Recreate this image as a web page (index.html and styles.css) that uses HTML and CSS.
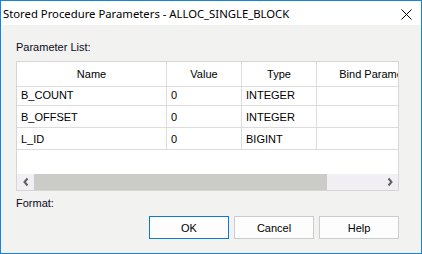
FILE: index.html
```html
<!DOCTYPE html>
<html lang="en">
<head>
    <meta charset="UTF-8">
    <title>Stored Procedure Parameters</title>
    <link rel="stylesheet" href="styles.css">
</head>
<body>
    <div class="window">
        <div class="titlebar">
            <span class="title">Stored Procedure Parameters - ALLOC_SINGLE_BLOCK</span>
            <svg class="close" width="11" height="11" viewBox="0 0 11 11">
                <path d="M0.5 0.5 L10.5 10.5 M10.5 0.5 L0.5 10.5" stroke="#000" stroke-width="1" fill="none"/>
            </svg>
        </div>

        <div class="content">
            <div class="label">Parameter List:</div>

            <div class="table">
                <div class="grid-clip">
                    <div class="grid">
                        <div class="cell head">Name</div>
                        <div class="cell head">Value</div>
                        <div class="cell head">Type</div>
                        <div class="cell head">Bind Parameter</div>

                        <div class="cell">B_COUNT</div>
                        <div class="cell">0</div>
                        <div class="cell">INTEGER</div>
                        <div class="cell"></div>

                        <div class="cell">B_OFFSET</div>
                        <div class="cell">0</div>
                        <div class="cell">INTEGER</div>
                        <div class="cell"></div>

                        <div class="cell">L_ID</div>
                        <div class="cell">0</div>
                        <div class="cell">BIGINT</div>
                        <div class="cell"></div>
                    </div>
                </div>

                <div class="hscroll">
                    <div class="arrow">
                        <svg width="8" height="10" viewBox="0 0 8 10"><path d="M5.5 1.5 L2.5 5 L5.5 8.5" stroke="#606060" stroke-width="2" fill="none"/></svg>
                    </div>
                    <div class="track"><div class="thumb"></div></div>
                    <div class="arrow">
                        <svg width="8" height="10" viewBox="0 0 8 10"><path d="M2.5 1.5 L5.5 5 L2.5 8.5" stroke="#606060" stroke-width="2" fill="none"/></svg>
                    </div>
                </div>
            </div>

            <div class="label format">Format:</div>

            <div class="buttons">
                <button class="btn default">OK</button>
                <button class="btn">Cancel</button>
                <button class="btn">Help</button>
            </div>
        </div>
    </div>
</body>
</html>
```

FILE: styles.css
```css
body {
    margin: 0;
    font-family: 'Liberation Sans', Arial, sans-serif;
    font-size: 11px;
    color: #000;
}
.window {
    width: 422px;
    height: 254px;
    box-sizing: border-box;
    border: 1px solid #1883d7;
    background: #f2f2f0;
    display: flex;
    flex-direction: column;
}
.titlebar {
    height: 24px;
    background: #fff;
    display: flex;
    align-items: center;
    justify-content: space-between;
    padding: 0 9px 0 2px;
}
.title {
    font-family: 'Noto Sans', sans-serif;
    font-size: 11.3px;
}
.close {
    display: block;
    margin-top: 2px;
}
.content {
    padding: 15px 22px 0 15px;
}
.label {
    line-height: 14px;
    color: #0a0a1e;
}
.table {
    margin-top: 7px;
    width: 383px;
    height: 130px;
    box-sizing: border-box;
    border: 1px solid #d6d6d6;
    background: #fff;
    display: flex;
    flex-direction: column;
    justify-content: space-between;
}
.grid-clip {
    overflow: hidden;
}
.grid {
    display: grid;
    grid-template-columns: 150px 75px 75px 122px;
    grid-auto-rows: 22px;
    width: 422px;
}
.cell {
    border-right: 1px solid #dcdcdc;
    border-bottom: 1px solid #dcdcdc;
    display: flex;
    align-items: center;
    padding-left: 4px;
    white-space: nowrap;
    overflow: hidden;
}
.head {
    height: 24px;
    justify-content: center;
    padding-left: 0;
}
.hscroll {
    height: 16px;
    display: flex;
    background: #f1eff4;
}
.arrow {
    width: 17px;
    display: flex;
    align-items: center;
    justify-content: center;
}
.track {
    flex: 1;
}
.thumb {
    width: 293px;
    height: 100%;
    background: #cbccc8;
}
.format {
    margin-top: 5px;
}
.buttons {
    margin-top: 6px;
    display: flex;
    justify-content: flex-end;
    gap: 5px;
}
.btn {
    width: 80px;
    height: 23px;
    box-sizing: border-box;
    border: 1px solid #cccccc;
    background: #fdfdfd;
    font-family: 'Liberation Sans', Arial, sans-serif;
    font-size: 11px;
    color: #000;
    padding: 0;
}
.btn.default {
    border-color: #0a7ad6;
}
```
